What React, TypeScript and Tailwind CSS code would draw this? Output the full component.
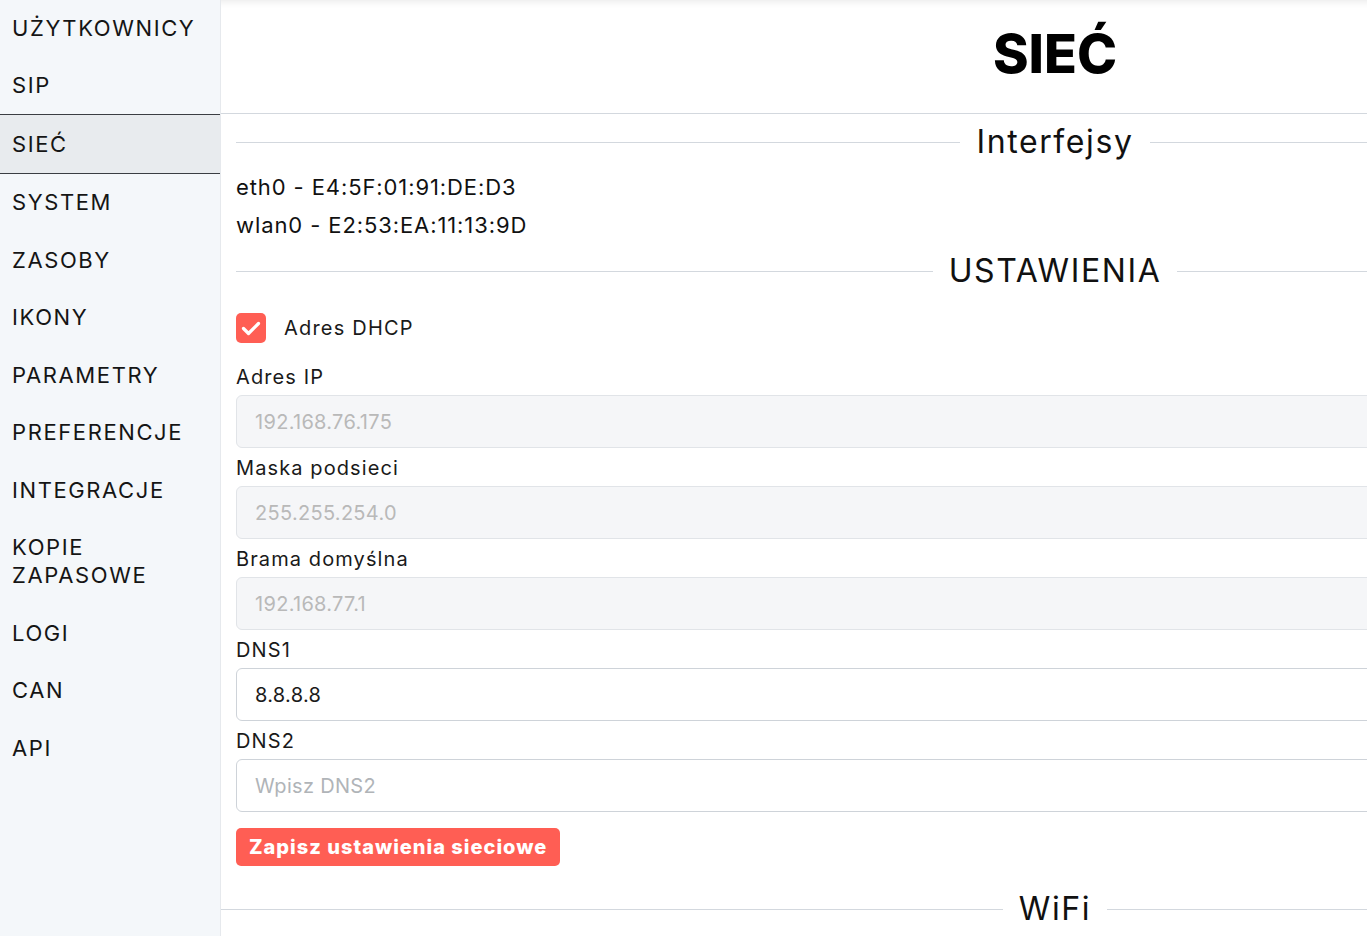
import React from "react";

const font = { fontFamily: '"Inter", "Noto Sans", sans-serif' };

const navItems = [
  "UŻYTKOWNICY",
  "SIP",
  "SIEĆ",
  "SYSTEM",
  "ZASOBY",
  "IKONY",
  "PARAMETRY",
  "PREFERENCJE",
  "INTEGRACJE",
  "KOPIE ZAPASOWE",
  "LOGI",
  "CAN",
  "API",
];

function SectionHeading({ title, className = "" }: { title: string; className?: string }) {
  return (
    <div className={"flex items-center " + className}>
      <div className="h-px flex-1 bg-[#d3d8de]" />
      <div className="px-4 text-[32px] leading-none tracking-[1.6px] text-[#111]">{title}</div>
      <div className="h-px flex-1 bg-[#d3d8de]" />
    </div>
  );
}

function Field({
  label,
  value,
  placeholder,
  disabled,
}: {
  label: string;
  value?: string;
  placeholder?: string;
  disabled?: boolean;
}) {
  return (
    <div className="mb-[8px]">
      <div className="h-[24px] text-[20px] leading-[24px] tracking-[1.1px] text-[#1a1a1a]">{label}</div>
      <div
        className={
          "mt-[6px] flex h-[53px] items-center rounded-[6px] border px-[18px] text-[20px] tracking-[0.3px] " +
          (disabled
            ? "border-[#e1e4e8] bg-[#f5f6f8] text-[#b9b9b9]"
            : "border-[#ced3d9] bg-white " + (value ? "text-[#1a1a1a]" : "text-[#b0b4b8]"))
        }
      >
        {value ?? placeholder}
      </div>
    </div>
  );
}

export default function App() {
  return (
    <div className="flex h-[936px] w-[1367px] overflow-hidden bg-white" style={font}>
      <aside className="h-full w-[221px] flex-none border-r border-[#e6e9ed] bg-[#f4f7fa]">
        <div className="mt-[-1px]">
          {navItems.map((item) => {
            const active = item === "SIEĆ";
            return (
              <div
                key={item}
                className={
                  "px-[12px] py-[14.75px] text-[22px] leading-[28px] tracking-[1.6px] text-[#151515] " +
                  (active ? "border-y border-[#3a3d42] bg-[#e8ebee]" : "")
                }
              >
                {item === "KOPIE ZAPASOWE" ? (
                  <>
                    KOPIE
                    <br />
                    ZAPASOWE
                  </>
                ) : (
                  item
                )}
              </div>
            );
          })}
        </div>
      </aside>
      <main className="w-[1668px] flex-none">
        <header className="flex h-[114px] items-center justify-center border-b border-[#d3d8de] shadow-[inset_0_10px_10px_-10px_rgba(0,0,0,0.12)]">
          <h1 className="mt-[-6px] text-[54px] font-extrabold leading-none text-black">SIEĆ</h1>
        </header>
        <div className="px-[15px]">
          <SectionHeading title="Interfejsy" className="h-[56px]" />
          <div className="mt-[-2px] text-[22px] leading-[38px] tracking-[0.9px] text-[#111]">
            <div>eth0 - E4:5F:01:91:DE:D3</div>
            <div>wlan0 - E2:53:EA:11:13:9D</div>
          </div>
          <SectionHeading title="USTAWIENIA" className="h-[54px]" />
          <div className="mt-[15px] flex h-[30px] items-center">
            <div className="flex h-[30px] w-[30px] items-center justify-center rounded-[5px] bg-[#ff5e54]">
              <svg width="24" height="24" viewBox="0 0 24 24" fill="none" stroke="white" strokeWidth="3.2" strokeLinecap="round" strokeLinejoin="round">
                <path d="M4.5 12.5l5 5L19.5 7.5" />
              </svg>
            </div>
            <span className="ml-[18px] text-[20px] tracking-[1.2px] text-[#1a1a1a]">Adres DHCP</span>
          </div>
          <div className="mt-[22px]">
            <Field label="Adres IP" value="192.168.76.175" disabled />
            <Field label="Maska podsieci" value="255.255.254.0" disabled />
            <Field label="Brama domyślna" value="192.168.77.1" disabled />
            <Field label="DNS1" value="8.8.8.8" />
            <Field label="DNS2" placeholder="Wpisz DNS2" />
          </div>
          <button className="mt-[8px] h-[38px] rounded-[5px] bg-[#ff5e54] px-[13px] text-[20px] font-extrabold tracking-[1px] text-white">
            Zapisz ustawienia sieciowe
          </button>
        </div>
        <SectionHeading title="WiFi" className="mt-[12px] h-[62px]" />
      </main>
    </div>
  );
}
